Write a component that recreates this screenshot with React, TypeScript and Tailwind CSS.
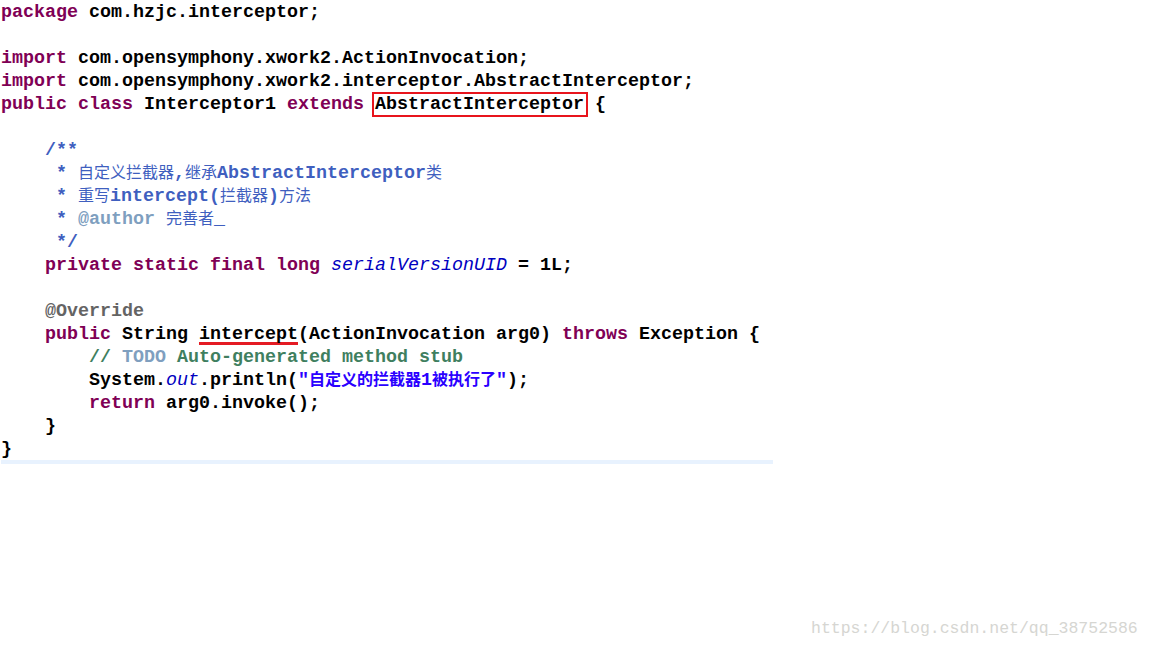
import React from "react";

const K = ({ children }: { children: React.ReactNode }) => (
  <span className="text-[#7f0055]">{children}</span>
);
const Doc = ({ children }: { children: React.ReactNode }) => (
  <span className="text-[#3f5fbf]">{children}</span>
);
const Cjk = ({ children, bold }: { children: React.ReactNode; bold?: boolean }) => (
  <span
    className={`text-[16px] leading-none ${bold ? "font-bold" : "font-normal"}`}
    style={{ fontFamily: '"Noto Sans CJK SC", sans-serif' }}
  >
    {children}
  </span>
);

const Line = ({ children }: { children?: React.ReactNode }) => (
  <div className="h-[23px] leading-[23px] whitespace-pre">{children ?? " "}</div>
);

export default function App() {
  return (
    <div className="relative w-[1152px] h-[648px] bg-white overflow-hidden">
      <div
        className="pl-[1px] pt-[1px] text-[18.33px] font-bold text-black"
        style={{ fontFamily: '"Liberation Mono", "Noto Sans CJK SC", monospace' }}
      >
        <Line>
          <K>package</K> com.hzjc.interceptor;
        </Line>
        <Line />
        <Line>
          <K>import</K> com.opensymphony.xwork2.ActionInvocation;
        </Line>
        <Line>
          <K>import</K> com.opensymphony.xwork2.interceptor.AbstractInterceptor;
        </Line>
        <Line>
          <K>public</K> <K>class</K> Interceptor1 <K>extends</K>{" "}
          <span className="relative inline-block h-[23px] align-top">
            AbstractInterceptor
            <span className="absolute top-[-1px] bottom-[-1px] left-[-3px] right-[-4px] border-2 border-[#e8141c]" />
          </span>{" "}
          {"{"}
        </Line>
        <Line />
        <Line>
          <Doc>{"    /**"}</Doc>
        </Line>
        <Line>
          <Doc>
            {"     * "}
            <Cjk>自定义拦截器</Cjk>,<Cjk>继承</Cjk>AbstractInterceptor<Cjk>类</Cjk>
          </Doc>
        </Line>
        <Line>
          <Doc>
            {"     * "}
            <Cjk>重写</Cjk>intercept(<Cjk>拦截器</Cjk>)<Cjk>方法</Cjk>
          </Doc>
        </Line>
        <Line>
          <Doc>
            {"     * "}
            <span className="text-[#7f9fbf]">@author</span> <Cjk>完善者</Cjk>_
          </Doc>
        </Line>
        <Line>
          <Doc>{"     */"}</Doc>
        </Line>
        <Line>
          {"    "}
          <K>private</K> <K>static</K> <K>final</K> <K>long</K>{" "}
          <span className="italic font-normal text-[#0000c0]">serialVersionUID</span> = 1L;
        </Line>
        <Line />
        <Line>
          {"    "}
          <span className="text-[#646464]">@Override</span>
        </Line>
        <Line>
          {"    "}
          <K>public</K> String{" "}
          <span className="underline decoration-[#e41b23] decoration-[3px] underline-offset-[3px] [text-decoration-skip-ink:none]">
            intercept
          </span>
          (ActionInvocation arg0) <K>throws</K> Exception {"{"}
        </Line>
        <Line>
          {"        "}
          <span className="text-[#3f7f5f]">
            // <span className="text-[#7f9fbf]">TODO</span> Auto-generated method stub
          </span>
        </Line>
        <Line>
          {"        "}System.<span className="italic font-normal text-[#0000c0]">out</span>.println(
          <span className="text-[#2a00ff]">
            "<Cjk bold>自定义的拦截器</Cjk>1<Cjk bold>被执行了</Cjk>"
          </span>
          );
        </Line>
        <Line>
          {"        "}
          <K>return</K> arg0.invoke();
        </Line>
        <Line>{"    }"}</Line>
        <Line>{"}"}</Line>
      </div>
      <div className="ml-[1px] mt-[-1px] h-[4px] w-[772px] bg-[#e8f2fe]" />

      <div
        className="absolute left-[811px] top-[619px] text-[16.5px] leading-[20px] text-[#d6d6d2] whitespace-pre"
        style={{ fontFamily: '"Liberation Mono", monospace' }}
      >
        https://blog.csdn.net/qq_38752586
      </div>
    </div>
  );
}
